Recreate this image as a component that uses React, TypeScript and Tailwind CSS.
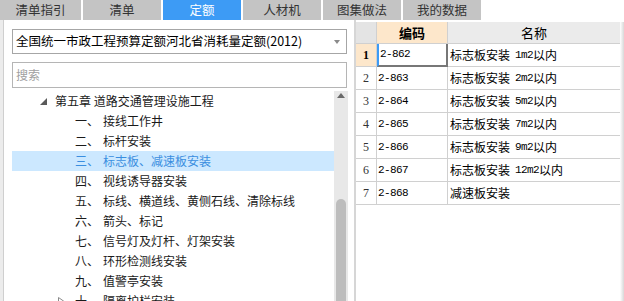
const tabs = ["清单指引", "清单", "定额", "人材机", "图集做法", "我的数据"];

const treeItems = [
  { no: "一、", label: "接线工作井" },
  { no: "二、", label: "标杆安装" },
  { no: "三、", label: "标志板、减速板安装", selected: true },
  { no: "四、", label: "视线诱导器安装" },
  { no: "五、", label: "标线、横道线、黄侧石线、清除标线" },
  { no: "六、", label: "箭头、标记" },
  { no: "七、", label: "信号灯及灯杆、灯架安装" },
  { no: "八、", label: "环形检测线安装" },
  { no: "九、", label: "值警亭安装" },
];

const rows = [
  { code: "2-862", name: "标志板安装", spec: "1m2", tail: "以内" },
  { code: "2-863", name: "标志板安装", spec: "2m2", tail: "以内" },
  { code: "2-864", name: "标志板安装", spec: "5m2", tail: "以内" },
  { code: "2-865", name: "标志板安装", spec: "7m2", tail: "以内" },
  { code: "2-866", name: "标志板安装", spec: "9m2", tail: "以内" },
  { code: "2-867", name: "标志板安装", spec: "12m2", tail: "以内" },
  { code: "2-868", name: "减速板安装", spec: "", tail: "" },
];

const cjk = { fontFamily: '"Noto Sans CJK SC", "Noto Sans", sans-serif' };
const mono = { fontFamily: '"Liberation Mono", "Noto Sans CJK SC", monospace' };

export default function App() {
  return (
    <div
      className="w-[624px] h-[301px] overflow-hidden bg-white flex flex-col text-[12px] text-[#1a1a1a]"
      style={cjk}
    >
      {/* tabs */}
      <div className="h-[20px] flex gap-[2px] shrink-0">
        {tabs.map((t, i) => (
          <div
            key={t}
            className={`${i === 0 ? "w-[81px]" : "w-[78px]"} h-full flex items-center justify-center text-[12.5px] ${
              t === "定额" ? "bg-[#3d9bf5] text-white" : "bg-[#c4c4c4] text-[#333]"
            }`}
          >
            {t}
          </div>
        ))}
      </div>

      <div className="flex flex-1 min-h-0">
        {/* left panel */}
        <div className="w-[354px] flex shrink-0">
          <div className="w-[3px] bg-[#ececec]" />
          <div className="flex-1 border-l border-[#cfcfcf] bg-white pl-[8px] pt-[9px] flex flex-col">
            <div className="w-[335px] h-[25px] border border-[#a6a6a6] flex items-center pl-[3px] pr-[6px]">
              <span className="flex-1 text-[12.5px] text-black">全国统一市政工程预算定额河北省消耗量定额(2012)</span>
              <svg width="6" height="4" viewBox="0 0 6 4">
                <polygon points="0,0 6,0 3,4" fill="#8a8a8a" />
              </svg>
            </div>
            <div className="w-[335px] h-[26px] border border-[#b5b5b5] mt-[8px] flex items-center pl-[3px] text-[#a0a0a0]">
              搜索
            </div>

            {/* tree */}
            <div className="flex mt-[3px] flex-1 min-h-0">
              <div className="w-[322px] flex flex-col overflow-hidden">
                <div className="h-[20px] shrink-0 flex items-center pl-[28px]">
                  <svg width="7" height="7" viewBox="0 0 7 7">
                    <polygon points="7,0 7,7 0,7" fill="#5a5a5a" />
                  </svg>
                  <span className="ml-[8px]">第五章 道路交通管理设施工程</span>
                </div>
                {treeItems.map((it) => (
                  <div
                    key={it.no}
                    className={`h-[20px] shrink-0 flex items-center pl-[63px] ${
                      it.selected ? "bg-[#cce8ff] text-[#3a8ee0]" : ""
                    }`}
                  >
                    <span className="w-[28px]">{it.no}</span>
                    <span>{it.label}</span>
                  </div>
                ))}
                <div className="h-[20px] shrink-0 flex items-center pl-[46px]">
                  <svg width="6" height="8" viewBox="0 0 6 8">
                    <polygon points="0.5,0.5 5.5,4 0.5,7.5" fill="none" stroke="#8a8a8a" />
                  </svg>
                  <span className="w-[28px] ml-[11px]">十、</span>
                  <span>隔离护栏安装</span>
                </div>
              </div>
              {/* scrollbar */}
              <div className="w-[14px] bg-[#e8e8e8] flex flex-col items-center">
                <svg width="8" height="5" viewBox="0 0 8 5" className="mt-[2px]">
                  <polygon points="4,0 8,5 0,5" fill="#6a6a6a" />
                </svg>
                <div className="w-[10px] flex-1 mt-[101px] bg-[#bdbdbd] rounded-t-full" />
              </div>
            </div>
          </div>
        </div>

        {/* right panel */}
        <div className="flex-1 flex border-l-2 border-[#d6d6d6] pt-[2px] bg-white">
          <div className="flex-1 flex flex-col">
            <div className="grid grid-cols-[21px_71px_1fr] h-[22px] border-b border-[#d0d0d0]">
              <div className="bg-[#e4e4e4] border-r border-[#d0d0d0]" />
              <div className="bg-[#fde7cb] border-r border-[#d0d0d0] flex items-center justify-center font-bold text-[13px] text-black">
                编码
              </div>
              <div className="bg-[#ebebeb] flex items-center justify-center text-[13px] text-black">名称</div>
            </div>
            {rows.map((r, i) => (
              <div key={r.code} className="grid grid-cols-[21px_71px_1fr] h-[23px] border-b border-[#d0d0d0]">
                <div
                  className={`border-r border-[#d0d0d0] flex items-center justify-center text-[12px] ${
                    i === 0 ? "bg-[#fde7cb] font-bold text-black" : "text-[#333]"
                  }`}
                  style={{ fontFamily: '"Liberation Serif", serif' }}
                >
                  {i + 1}
                </div>
                <div
                  className={`flex items-center pl-[1px] text-[11px] tracking-[-0.6px] text-black ${
                    i === 0 ? "border-l-2 border-l-[#3d9bf5] border-r-2 border-r-[#777] border-b-2 border-b-[#777] -mb-[1px]" : "border-r border-[#d0d0d0]"
                  }`}
                  style={mono}
                >
                  {r.code}
                </div>
                <div className="flex items-center pl-[2px] text-black">
                  <span>{r.name}</span>
                  {r.spec && (
                    <>
                      <span className="ml-[5px] text-[11px] tracking-[-0.6px]" style={mono}>
                        {r.spec}
                      </span>
                      <span>{r.tail}</span>
                    </>
                  )}
                </div>
              </div>
            ))}
          </div>
          <div className="w-[4px] bg-gradient-to-r from-[#ffffff] to-[#d8d8d8]" />
        </div>
      </div>
    </div>
  );
}
